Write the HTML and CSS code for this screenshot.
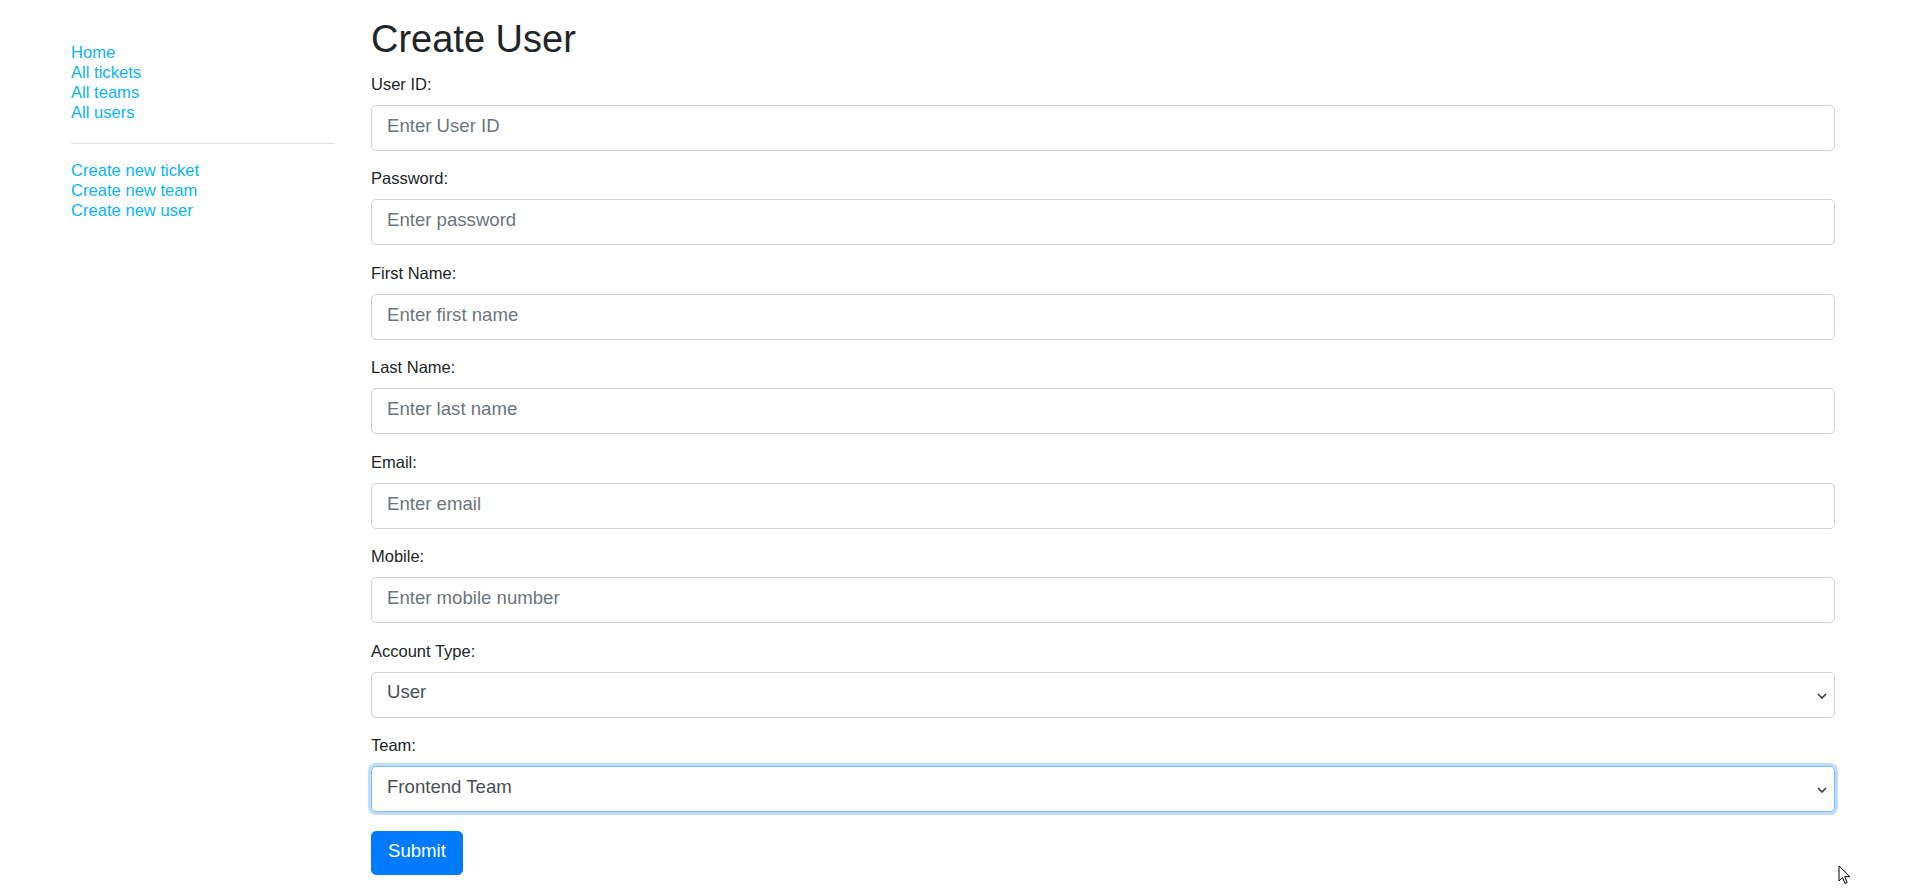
FILE: index.html
```html
<!DOCTYPE html>
<html lang="en">
<head>
<meta charset="utf-8">
<title>Create User</title>
<link rel="stylesheet" href="styles.css">
</head>
<body>
<div class="page">
  <aside class="sidebar">
    <ul class="nav">
      <li><a href="#">Home</a></li>
      <li><a href="#">All tickets</a></li>
      <li><a href="#">All teams</a></li>
      <li><a href="#">All users</a></li>
    </ul>
    <hr class="divider">
    <ul class="nav">
      <li><a href="#">Create new ticket</a></li>
      <li><a href="#">Create new team</a></li>
      <li><a href="#">Create new user</a></li>
    </ul>
  </aside>
  <main class="main">
    <h1 class="title">Create User</h1>
    <form class="form">
      <div class="group">
        <label class="label" for="uid">User ID:</label>
        <input class="control" id="uid" type="text" placeholder="Enter User ID">
      </div>
      <div class="group">
        <label class="label" for="pwd">Password:</label>
        <input class="control" id="pwd" type="password" placeholder="Enter password">
      </div>
      <div class="group">
        <label class="label" for="fn">First Name:</label>
        <input class="control" id="fn" type="text" placeholder="Enter first name">
      </div>
      <div class="group">
        <label class="label" for="ln">Last Name:</label>
        <input class="control" id="ln" type="text" placeholder="Enter last name">
      </div>
      <div class="group">
        <label class="label" for="em">Email:</label>
        <input class="control" id="em" type="text" placeholder="Enter email">
      </div>
      <div class="group">
        <label class="label" for="mob">Mobile:</label>
        <input class="control" id="mob" type="text" placeholder="Enter mobile number">
      </div>
      <div class="group">
        <label class="label" for="acc">Account Type:</label>
        <div class="select-wrap">
          <select class="control select" id="acc">
            <option>User</option>
            <option>Admin</option>
          </select>
          <svg class="chev" width="10" height="6" viewBox="0 0 10 6"><path d="M1 1l4 4 4-4" fill="none" stroke="#343a40" stroke-width="1.6"/></svg>
        </div>
      </div>
      <div class="group">
        <label class="label" for="team">Team:</label>
        <div class="select-wrap">
          <select class="control select focused" id="team">
            <option>Frontend Team</option>
            <option>Backend Team</option>
          </select>
          <svg class="chev" width="10" height="6" viewBox="0 0 10 6"><path d="M1 1l4 4 4-4" fill="none" stroke="#343a40" stroke-width="1.6"/></svg>
        </div>
      </div>
      <button class="btn" type="button">Submit</button>
    </form>
  </main>
</div>
<svg class="cursor" width="13" height="20" viewBox="0 0 13 20"><path d="M1 1v15l3.5-3.5 2.5 6 2.2-1-2.5-5.8H12z" fill="#fff" stroke="#000" stroke-width="1" stroke-linejoin="round"/></svg>
</body>
</html>
```
FILE: styles.css
```css
html, body {
  margin: 0;
  padding: 0;
  background: #fff;
}
body {
  font-family: "Liberation Sans", Arial, sans-serif;
  font-size: 16px;
  color: #212529;
}
.page {
  display: flex;
  gap: 36px;
  padding: 0 72px 0 71px;
}
.sidebar {
  width: 264px;
  flex: none;
  padding-top: 43px;
}
.nav {
  list-style: none;
  margin: 0;
  padding: 0;
  font-size: 16.6px;
  line-height: 20px;
}
.nav a {
  color: #0ab4f5;
  text-decoration: none;
}
.divider {
  border: 0;
  border-top: 1px solid #dee2e6;
  margin: 20px 0 17px;
}
.main {
  flex: 1;
  min-width: 0;
}
.title {
  font-size: 38px;
  font-weight: 400;
  line-height: 1.2;
  margin: 17px 0 10px;
  color: #212529;
}
.form {
  display: flex;
  flex-direction: column;
}
.group {
  display: flex;
  flex-direction: column;
  margin-bottom: 16.5px;
}
.label {
  font-size: 16.5px;
  line-height: 22px;
  margin-bottom: 10px;
}
.control {
  box-sizing: border-box;
  width: 100%;
  height: 46px;
  padding: 0 15px 4px;
  font-family: "Liberation Sans", Arial, sans-serif;
  font-size: 18.6px;
  color: #495057;
  background: #fff;
  border: 1px solid #ced4da;
  border-radius: 5px;
  outline: none;
}
.control::placeholder {
  color: #6c757d;
}
.select-wrap {
  position: relative;
}
.select {
  appearance: none;
  -webkit-appearance: none;
  padding: 0 15px 6px;
}
.focused {
  border-color: #80bdff;
  box-shadow: 0 0 0 3px rgba(0, 123, 255, 0.25);
}
.chev {
  position: absolute;
  right: 8px;
  top: 21px;
  pointer-events: none;
}
.btn {
  align-self: flex-start;
  margin-top: 2px;
  height: 44px;
  padding: 0 16px 3px;
  font-family: "Liberation Sans", Arial, sans-serif;
  font-size: 18.6px;
  color: #fff;
  background: #007bff;
  border: 1px solid #007bff;
  border-radius: 5px;
}
.cursor {
  position: absolute;
  left: 1838px;
  top: 865px;
}
```
